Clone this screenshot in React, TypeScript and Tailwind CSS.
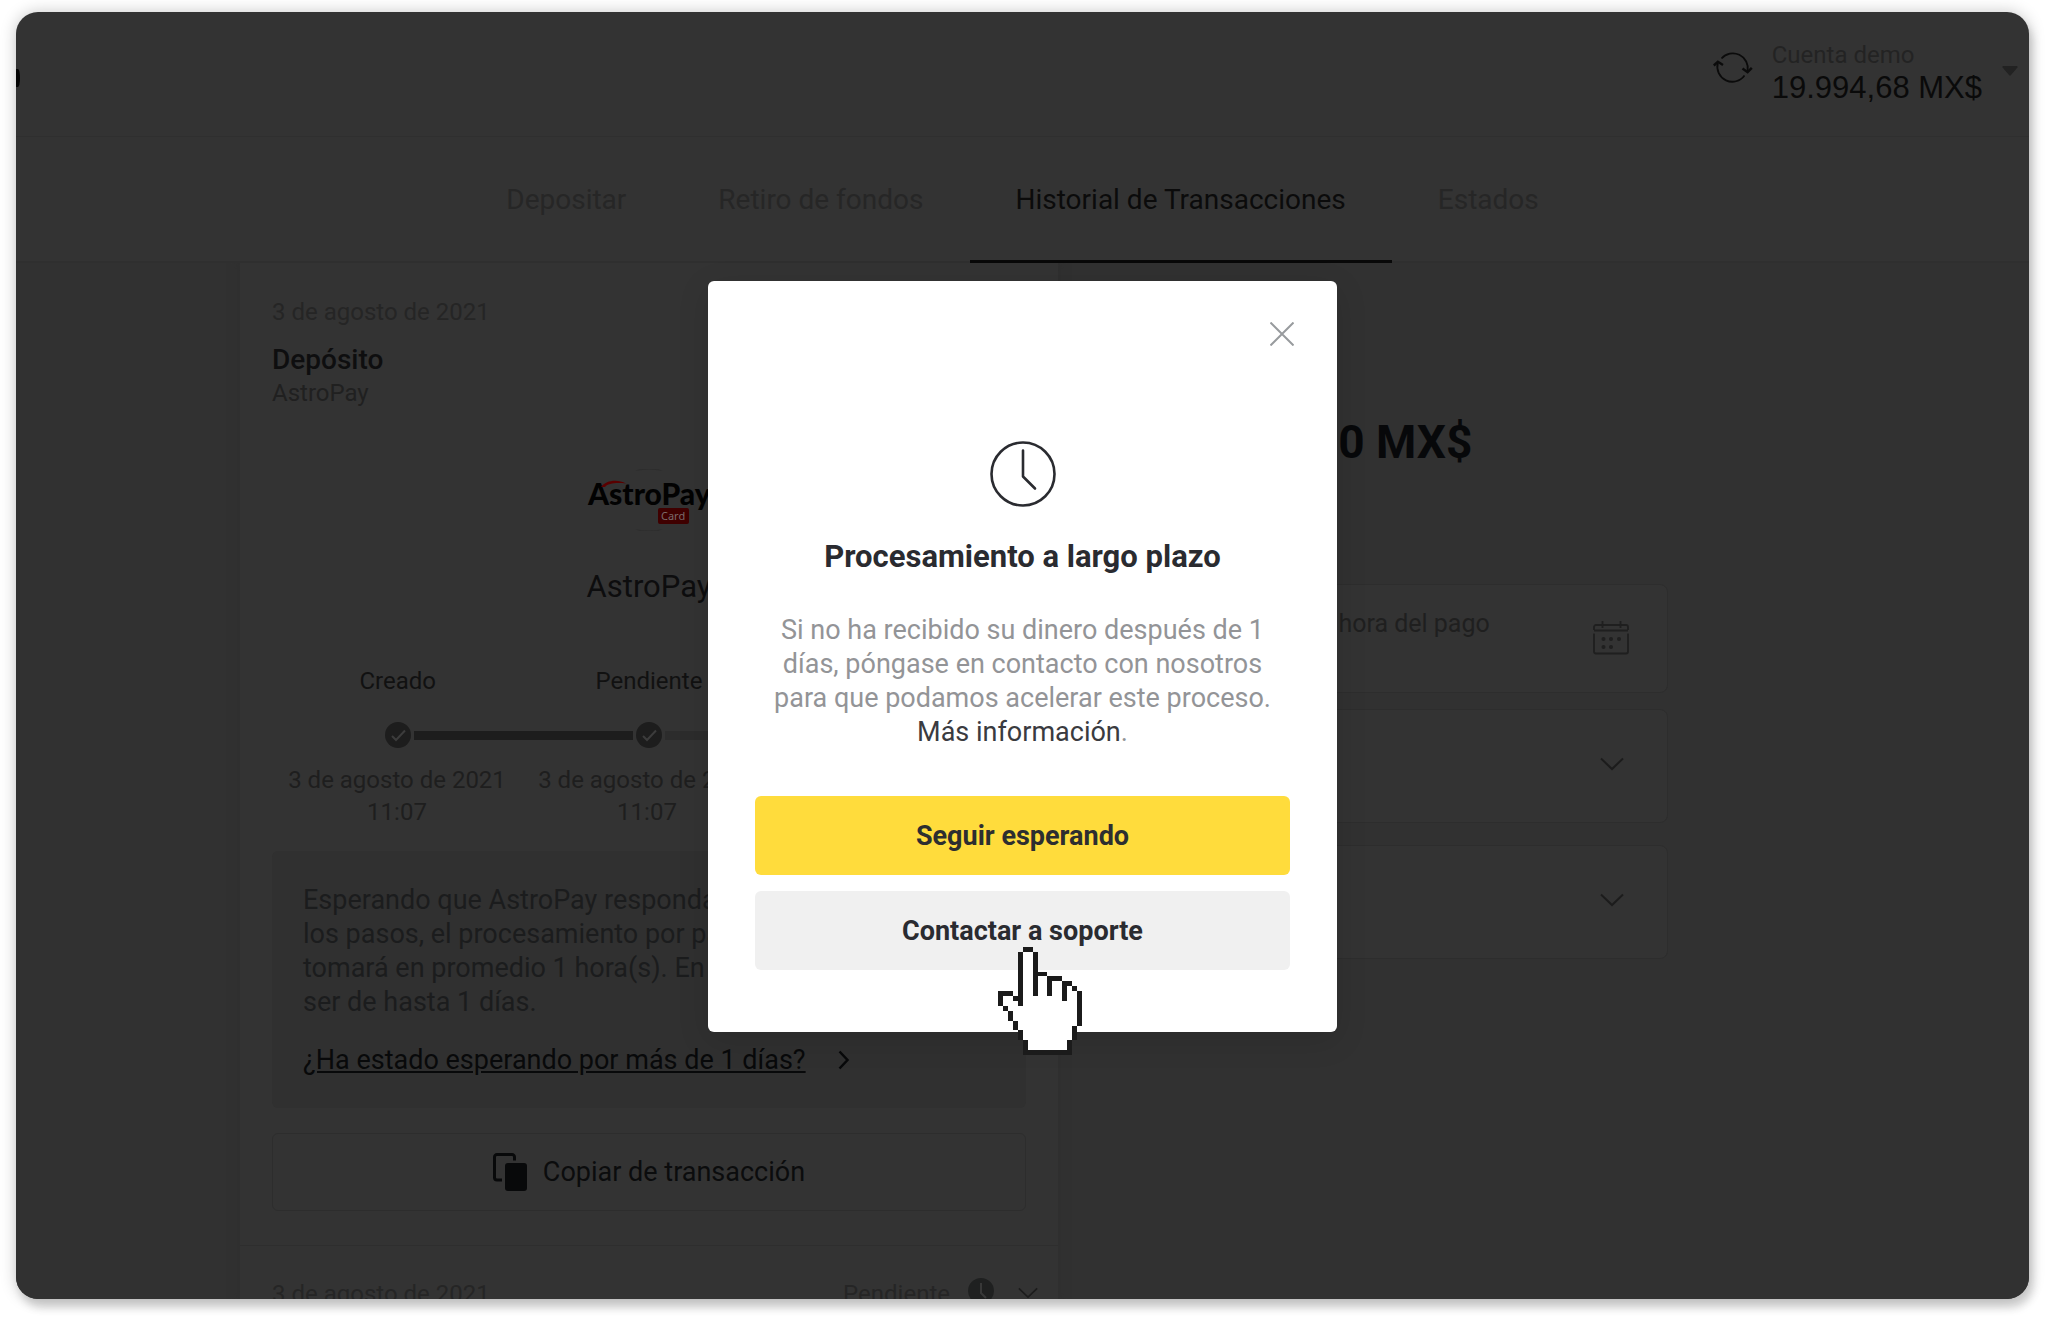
import type { ReactNode } from "react";

interface StepProps {
  label: string;
  children?: ReactNode;
}

const tabs = [
  { name: "Depositar", active: false },
  { name: "Retiro de fondos", active: false },
  { name: "Historial de Transacciones", active: true },
  { name: "Estados", active: false },
];

function RefreshIcon() {
  return (
    <svg width="40" height="36" viewBox="0 0 40 36" fill="none" stroke="#0b0b0b" strokeWidth="1.8">
      <path d="M8.5 9.5A15 15 0 0 1 34.6 22" />
      <path d="M31.5 26.5A15 15 0 0 1 4.8 14" />
      <path d="M29.5 19.5 34.6 23.2 38.8 18.8M.8 16.5 4.9 12.8 10 16" strokeWidth="2.4" />
    </svg>
  );
}

function ChevronDown({ className }: { className?: string }) {
  return (
    <svg className={className} width="24" height="14" viewBox="0 0 24 14" fill="none" strokeWidth="2">
      <path d="M1 1.5 12 12 23 1.5" />
    </svg>
  );
}

function CalendarIcon() {
  return (
    <svg width="36" height="34" viewBox="0 0 36 34" fill="none" stroke="#1f1f1f" strokeWidth="1.8">
      <path d="M1 9V6a2 2 0 0 1 2-2h30a2 2 0 0 1 2 2v3M1 9.500h34M1 12.500v18a2 2 0 0 0 2 2h30a2 2 0 0 0 2-2v-18" />
      <path d="M9.500 0v7M27.500 0v7" />
      <g fill="#1f1f1f" stroke="none">
        <circle cx="10.500" cy="18" r="2" />
        <circle cx="18" cy="18" r="2" />
        <circle cx="26" cy="18" r="2" />
        <circle cx="10.500" cy="26" r="2" />
        <circle cx="18" cy="26" r="2" />
      </g>
    </svg>
  );
}

function CheckDot() {
  return (
    <svg width="26" height="26" viewBox="0 0 26 26" fill="none">
      <circle cx="13" cy="13" r="13" fill="#1d1d1d" />
      <path d="m7 14 4 4 9-9.500" stroke="#3c3c3c" strokeWidth="2" />
    </svg>
  );
}

function AstroPayLogo() {
  return (
    <svg width="124" height="62" viewBox="0 0 124 62">
      <path d="M48 2a31 31 0 0 1 28 0q-14-3-28 0M48 60a31 31 0 0 0 28 0q-14 3-28 0" fill="#2d2d2d" />
      <text x="1" y="36" fontFamily="Lato, sans-serif" fontWeight="900" fontSize="30" fill="#020202">
        AstroPay
      </text>
      <path d="M14 18C19 11 31 10 39 14.500 30 13.500 21 14 18 18z" fill="#5a0000" />
      <rect x="71" y="39" width="31" height="16" rx="2" fill="#3f0000" />
      <text x="74" y="51" fontFamily="'Noto Sans', sans-serif" fontSize="11" fill="#7a6a6a">
        Card
      </text>
    </svg>
  );
}

function CopyIcon() {
  return (
    <svg width="34" height="38" viewBox="0 0 34 38" fill="none">
      <path
        d="M9 27H4a2.500 2.500 0 0 1-2.500-2.500V4A2.500 2.500 0 0 1 4 1.500h15A2.500 2.500 0 0 1 21.500 4v3.500"
        stroke="#08090a"
        strokeWidth="3"
      />
      <rect x="12" y="10" width="22" height="28" rx="3" fill="#08090a" />
    </svg>
  );
}

function ClockIcon() {
  return (
    <svg width="66" height="66" viewBox="0 0 66 66" fill="none" stroke="#2a2b30" strokeLinecap="round">
      <circle cx="33" cy="33" r="31.500" strokeWidth="2.600" />
      <path d="M33 9.500v26L45 47.500" strokeWidth="2.600" strokeLinejoin="round" />
    </svg>
  );
}

function HandCursor() {
  return (
    <svg width="84" height="108" viewBox="0 0 17 22" preserveAspectRatio="none" shapeRendering="crispEdges">
      <path
        fill="#fff"
        d="M5 0H7V1H8V5H10V6H13V7H15V8H16V9H17V16H16V19H15V22H5V19H4V17H3V15H2V13H1V12H0V9H3V10H4V1H5z"
      />
      <path
        fill="#1b1b1b"
        d="M5 0h2v1H5zM4 1h1v11H4zM7 1h1v9H7zM8 5h2v1H8zM10 6h3v1h-3zM10 7h1v3h-1zM13 7h2v1h-2zM13 8h1v3h-1zM15 8h1v1h-1zM16 9h1v7h-1zM15 16h1v3h-1zM14 19h1v3h-1zM5 21h9v1H5zM5 19h1v2H5zM4 17h1v2H4zM3 15h1v2H3zM2 13h1v2H2zM1 12h1v1H1zM0 9h3v1H0zM0 10h1v2H0zM3 10h1v1H3z"
      />
    </svg>
  );
}

function Header() {
  return (
    <header className="flex h-[125px] shrink-0 items-start justify-between border-b border-[#2f2f2f]">
      <div className="mt-[57px] h-[18px] w-1 rounded-r-[100%] bg-[#050505]" />
      <div className="flex pt-[27px] pr-[11px]">
        <button type="button" aria-label="Actualizar" className="mt-2.5 mr-[19px] h-9">
          <RefreshIcon />
        </button>
        <button type="button" className="flex text-left">
          <span className="mr-5">
            <span className="block text-[24px] leading-8 text-[#232323]">Cuenta demo</span>
            <span className="block font-['Liberation_Sans',sans-serif] text-[31px] leading-[34px] text-[#0a0a0a]">
              19.994,68 MX$
            </span>
          </span>
          <svg className="mt-[27px]" width="16" height="10" viewBox="0 0 16 10">
            <path d="M1.500 0h13q2 .5.5 2L9 9q-1 1-2 0L1 2Q-.5.500 1.500 0" fill="#222" />
          </svg>
        </button>
      </div>
    </header>
  );
}

function Tabs() {
  return (
    <nav className="flex h-[126px] shrink-0 justify-center border-b-2 border-[#2f2f2f] text-[28px]">
      {tabs.map((tab) => (
        <a
          key={tab.name}
          href="#"
          className={
            tab.active
              ? "-mb-0.5 border-b-3 border-[#080808] px-[46px] pt-[46px] leading-[34px] text-[#0b0b0b]"
              : "px-[46px] pt-[46px] leading-[34px] text-[#262626]"
          }
        >
          {tab.name}
        </a>
      ))}
    </nav>
  );
}

function Step({ label, children }: StepProps) {
  return (
    <div className="flex flex-col items-center">
      <span className="text-[24px] leading-8 text-[#111]">{label}</span>
      <div className="mt-[25px] flex w-full items-center">{children}</div>
    </div>
  );
}

function Transactions() {
  return (
    <section className="w-[818px] shrink-0 bg-[#333] shadow-[0_0_8px_2px_#2f2f2f]">
      <div className="px-8 pt-[33px]">
        <p className="text-[24px] leading-8 text-[#252525]">3 de agosto de 2021</p>
        <h2 className="mt-[15px] text-[28px] leading-[34px] font-medium text-[#0e0e0f]">Depósito</h2>
        <p className="text-[24px] leading-8 text-[#202020]">AstroPay</p>

        <div className="mt-[60px] flex flex-col items-center">
          <AstroPayLogo />
          <p className="mt-9 text-[31px] leading-10 text-[#0d0d0e]">AstroPay</p>
        </div>

        <div className="mt-[58px] grid grid-cols-3">
          <Step label="Creado">
            <span className="mr-[3px] flex-1" />
            <CheckDot />
            <span className="ml-[3px] h-[9px] flex-1 bg-[#1d1d1d]" />
          </Step>
          <Step label="Pendiente">
            <span className="mr-[3px] h-[9px] flex-1 bg-[#1d1d1d]" />
            <CheckDot />
            <span className="ml-[3px] h-[9px] flex-1 bg-[#2c2c2c]" />
          </Step>
          <Step label="Completado">
            <span className="mr-[3px] h-[9px] flex-1 bg-[#2c2c2c]" />
            <span className="size-[26px] rounded-full bg-[#2c2c2c]" />
            <span className="ml-[3px] flex-1" />
          </Step>
        </div>
        <div className="mt-4 grid grid-cols-3 pr-1 text-center text-[24px] leading-8 text-[#1e1e1e]">
          <p>
            3 de agosto de 2021
            <br />
            11:07
          </p>
          <p>
            3 de agosto de 2021
            <br />
            11:07
          </p>
        </div>

        <div className="mt-[23px] rounded-md bg-[#303030] px-[31px] pt-8 pb-[31px] text-[27px] leading-[34px]">
          <p className="text-[#1b1c1d]">
            Esperando que AstroPay responda. Completados
            <br />
            los pasos, el procesamiento por parte de AstroPay
            <br />
            tomará en promedio 1 hora(s). En casos puede
            <br />
            ser de hasta 1 días.
          </p>
          <a href="#" className="mt-6 flex items-center text-[#08090a]">
            <span className="underline">¿Ha estado esperando por más de 1 días?</span>
            <svg className="ml-8" width="12" height="20" viewBox="0 0 12 20" fill="none">
              <path d="m1.500 1.500 8 8.500-8 8.500" stroke="#08090a" strokeWidth="2.500" />
            </svg>
          </a>
        </div>

        <button
          type="button"
          className="mt-[25px] flex h-[78px] w-full items-center justify-center rounded-md border border-[#2d2d2d] text-[27px] leading-[34px] text-[#0b0c0d]"
        >
          <CopyIcon />
          <span className="ml-4">Copiar de transacción</span>
        </button>
      </div>

      <div className="mt-[34px] flex border-t border-[#2e2e2e] px-8 pt-8 text-[24px] leading-8 text-[#252525]">
        <p className="flex-1">3 de agosto de 2021</p>
        <p>Pendiente</p>
        <svg className="ml-[18px]" width="26" height="26" viewBox="0 0 26 26" fill="none">
          <circle cx="13" cy="13" r="13" fill="#1f2020" />
          <path d="M13 5v10l5 5" stroke="#383838" strokeWidth="2" />
        </svg>
        <ChevronDown className="mt-2 -mr-3 ml-6 w-5 stroke-[#1c1c1c]" />
      </div>
    </section>
  );
}

function Payment() {
  return (
    <section className="min-w-0 flex-1 px-[137px] pt-[149px]">
      <p className="text-[46px] leading-[60px] font-bold text-[#07080a]">2000,00 MX$</p>
      <label className="mt-[112px] flex h-[109px] justify-between rounded-lg border border-[#2d2d2d] bg-[#333] pr-[38px] pl-[25px]">
        <span className="pt-[23px] text-[25px] leading-8 text-[#1f1f1f]">Fecha y la hora del pago</span>
        <input type="text" className="w-0 min-w-0 flex-1 outline-none" />
        <span className="pt-9">
          <CalendarIcon />
        </span>
      </label>
      <button
        type="button"
        aria-label="Banco"
        className="mt-4 flex h-[114px] w-full items-center justify-end rounded-lg border border-[#2d2d2d] bg-[#333] pr-[43px] pb-1"
      >
        <ChevronDown className="stroke-[#1c1c1c]" />
      </button>
      <button
        type="button"
        aria-label="Cuenta"
        className="mt-[22px] flex h-[114px] w-full items-center justify-end rounded-lg border border-[#2d2d2d] bg-[#333] pr-[43px] pb-1"
      >
        <ChevronDown className="stroke-[#1c1c1c]" />
      </button>
    </section>
  );
}

function WaitDialog() {
  return (
    <div className="absolute inset-0 flex items-center justify-center pt-0.5">
      <div
        role="dialog"
        aria-labelledby="wait-title"
        className="w-[629px] rounded-md bg-white text-center shadow-[0_8px_32px_rgba(0,0,0,0.12)]"
      >
        <div className="flex justify-end pt-[41px] pr-[43px]">
          <button type="button" aria-label="Cerrar">
            <svg width="24" height="24" viewBox="0 0 24 24" stroke="#989b9e" strokeWidth="2">
              <path d="m.5.500 23 23M23.500.500l-23 23" />
            </svg>
          </button>
        </div>
        <div className="px-[47px] pb-[62px]">
          <div className="mt-[95px] flex justify-center">
            <ClockIcon />
          </div>
          <h1 id="wait-title" className="mt-[30px] text-[31px] leading-10 font-bold text-[#2a2b30]">
            Procesamiento a largo plazo
          </h1>
          <p className="mt-9 text-[27px] leading-[34px] text-[#939497]">
            Si no ha recibido su dinero después de 1<br />
            días, póngase en contacto con nosotros
            <br />
            para que podamos acelerar este proceso.
            <br />
            <a href="#" className="text-[#3a3b40]">
              Más información
            </a>
            .
          </p>
          <button
            type="button"
            className="mt-[47px] h-[79px] w-full rounded-md bg-[#ffdc3c] pt-0.5 text-[27px] font-bold text-[#2d2e30]"
          >
            Seguir esperando
          </button>
          <div className="relative mt-4">
            <button
              type="button"
              className="block h-[79px] w-full rounded-md bg-[#f0f0f0] pt-0.5 text-[27px] font-bold text-[#2a2b30]"
            >
              Contactar a soporte
            </button>
            <span className="pointer-events-none absolute top-14 left-[243px]">
              <HandCursor />
            </span>
          </div>
        </div>
      </div>
    </div>
  );
}

export default function App() {
  return (
    <div className="h-screen bg-white pt-3 pr-[19px] pb-[23px] pl-4 font-['Roboto',sans-serif]">
      <main className="relative flex h-full flex-col overflow-hidden rounded-[22px] bg-[#333] shadow-[0_0_16px_rgba(0,0,0,0.22),4px_9px_8px_rgba(0,0,0,0.15)]">
        <Header />
        <Tabs />
        <div className="flex min-h-0 flex-1 justify-center overflow-hidden bg-[#313131]">
          <div className="flex w-full max-w-[1565px]">
            <Transactions />
            <Payment />
          </div>
        </div>
        <WaitDialog />
      </main>
    </div>
  );
}
